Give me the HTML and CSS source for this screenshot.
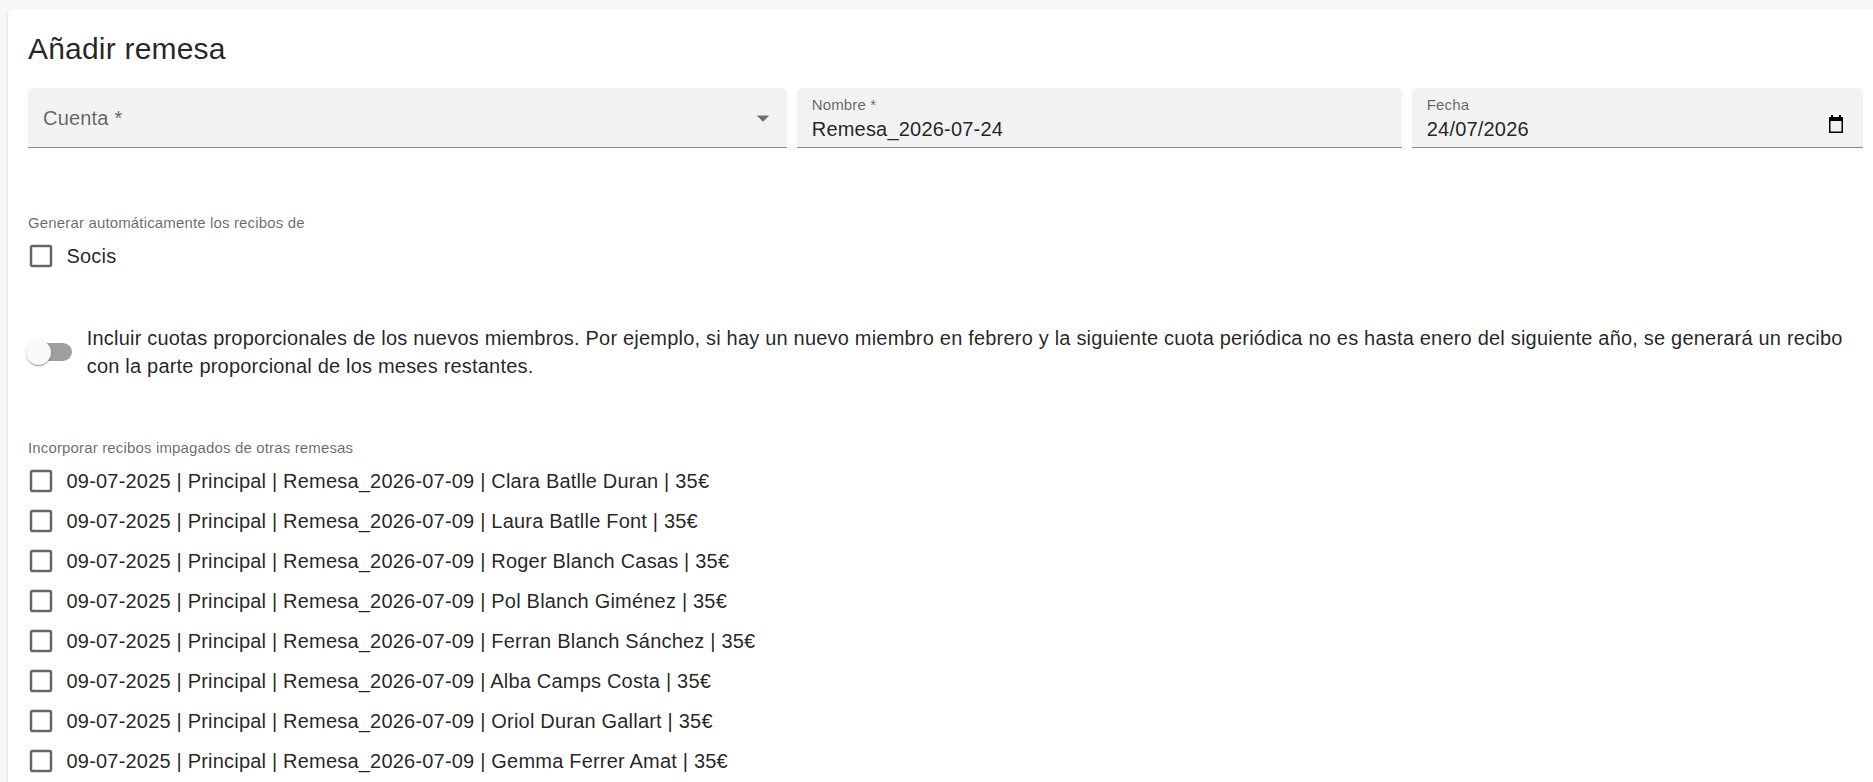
FILE: index.html
```html
<!DOCTYPE html>
<html lang="es">
<head>
<meta charset="utf-8">
<title>Añadir remesa</title>
<link rel="stylesheet" href="styles.css">
</head>
<body>
<div class="page">
  <section class="card">
    <h2 class="title">Añadir remesa</h2>

    <div class="fields">
      <div class="field field-5">
        <span class="placeholder">Cuenta *</span>
        <svg class="arrow" viewBox="0 0 24 24" aria-hidden="true"><path d="M7 10l5 5 5-5z"/></svg>
      </div>
      <div class="field field-4">
        <div class="field-body">
          <span class="field-label">Nombre *</span>
          <span class="field-value">Remesa_2026-07-24</span>
        </div>
      </div>
      <div class="field field-3">
        <div class="field-body">
          <span class="field-label">Fecha</span>
          <span class="field-value">24/07/2026</span>
        </div>
        <svg class="calendar" viewBox="0 0 16 18" aria-hidden="true">
          <rect x="3" y="0" width="2" height="3"/>
          <rect x="11" y="0" width="2" height="3"/>
          <path d="M1 2h14v16H1z M2.5 6v10.5h11V6z" fill-rule="evenodd"/>
        </svg>
      </div>
    </div>

    <div class="group group-auto">
      <p class="legend">Generar automáticamente los recibos de</p>
      <label class="check">
        <svg class="box" viewBox="0 0 24 24" aria-hidden="true"><path d="M19 5v14H5V5h14m0-2H5c-1.11 0-2 .9-2 2v14c0 1.1.89 2 2 2h14c1.11 0 2-.9 2-2V5c0-1.1-.89-2-2-2z"/></svg>
        <span>Socis</span>
      </label>
    </div>

    <label class="switch-row">
      <span class="switch"><span class="track"></span><span class="thumb"></span></span>
      <span class="switch-text">Incluir cuotas proporcionales de los nuevos miembros. Por ejemplo, si hay un nuevo miembro en febrero y la siguiente cuota periódica no es hasta enero del siguiente año, se generará un recibo con la parte proporcional de los meses restantes.</span>
    </label>

    <div class="group group-unpaid">
      <p class="legend">Incorporar recibos impagados de otras remesas</p>
      <ul class="receipts">
        <li><label class="check"><svg class="box" viewBox="0 0 24 24" aria-hidden="true"><path d="M19 5v14H5V5h14m0-2H5c-1.11 0-2 .9-2 2v14c0 1.1.89 2 2 2h14c1.11 0 2-.9 2-2V5c0-1.1-.89-2-2-2z"/></svg><span>09-07-2025 | Principal | Remesa_2026-07-09 | Clara Batlle Duran | 35€</span></label></li>
        <li><label class="check"><svg class="box" viewBox="0 0 24 24" aria-hidden="true"><path d="M19 5v14H5V5h14m0-2H5c-1.11 0-2 .9-2 2v14c0 1.1.89 2 2 2h14c1.11 0 2-.9 2-2V5c0-1.1-.89-2-2-2z"/></svg><span>09-07-2025 | Principal | Remesa_2026-07-09 | Laura Batlle Font | 35€</span></label></li>
        <li><label class="check"><svg class="box" viewBox="0 0 24 24" aria-hidden="true"><path d="M19 5v14H5V5h14m0-2H5c-1.11 0-2 .9-2 2v14c0 1.1.89 2 2 2h14c1.11 0 2-.9 2-2V5c0-1.1-.89-2-2-2z"/></svg><span>09-07-2025 | Principal | Remesa_2026-07-09 | Roger Blanch Casas | 35€</span></label></li>
        <li><label class="check"><svg class="box" viewBox="0 0 24 24" aria-hidden="true"><path d="M19 5v14H5V5h14m0-2H5c-1.11 0-2 .9-2 2v14c0 1.1.89 2 2 2h14c1.11 0 2-.9 2-2V5c0-1.1-.89-2-2-2z"/></svg><span>09-07-2025 | Principal | Remesa_2026-07-09 | Pol Blanch Giménez | 35€</span></label></li>
        <li><label class="check"><svg class="box" viewBox="0 0 24 24" aria-hidden="true"><path d="M19 5v14H5V5h14m0-2H5c-1.11 0-2 .9-2 2v14c0 1.1.89 2 2 2h14c1.11 0 2-.9 2-2V5c0-1.1-.89-2-2-2z"/></svg><span>09-07-2025 | Principal | Remesa_2026-07-09 | Ferran Blanch Sánchez | 35€</span></label></li>
        <li><label class="check"><svg class="box" viewBox="0 0 24 24" aria-hidden="true"><path d="M19 5v14H5V5h14m0-2H5c-1.11 0-2 .9-2 2v14c0 1.1.89 2 2 2h14c1.11 0 2-.9 2-2V5c0-1.1-.89-2-2-2z"/></svg><span>09-07-2025 | Principal | Remesa_2026-07-09 | Alba Camps Costa | 35€</span></label></li>
        <li><label class="check"><svg class="box" viewBox="0 0 24 24" aria-hidden="true"><path d="M19 5v14H5V5h14m0-2H5c-1.11 0-2 .9-2 2v14c0 1.1.89 2 2 2h14c1.11 0 2-.9 2-2V5c0-1.1-.89-2-2-2z"/></svg><span>09-07-2025 | Principal | Remesa_2026-07-09 | Oriol Duran Gallart | 35€</span></label></li>
        <li><label class="check"><svg class="box" viewBox="0 0 24 24" aria-hidden="true"><path d="M19 5v14H5V5h14m0-2H5c-1.11 0-2 .9-2 2v14c0 1.1.89 2 2 2h14c1.11 0 2-.9 2-2V5c0-1.1-.89-2-2-2z"/></svg><span>09-07-2025 | Principal | Remesa_2026-07-09 | Gemma Ferrer Amat | 35€</span></label></li>
      </ul>
    </div>
  </section>
</div>
</body>
</html>
```

FILE: styles.css
```css
* {
  box-sizing: border-box;
}

html,
body {
  margin: 0;
  height: 100%;
  overflow: hidden;
  background: #f7f7f7;
}

body {
  font-family: "Liberation Sans", Arial, Helvetica, sans-serif;
  color: rgba(0, 0, 0, 0.87);
  font-size: 20px;
  line-height: 1.5;
  letter-spacing: 0.2px;
}

.page {
  padding: 9px 0 0 8px;
}

/* Paper card; it runs slightly past the right edge of the window */
.card {
  margin-right: -10px;
  background: #fff;
  border-radius: 5px;
  box-shadow: 0 2px 1px -1px rgba(0, 0, 0, 0.2), 0 1px 1px 0 rgba(0, 0, 0, 0.14), 0 1px 3px 0 rgba(0, 0, 0, 0.12);
  padding: 20px 20px 40px;
  min-height: 900px;
}

.title {
  margin: 0 0 19px;
  font-size: 30px;
  font-weight: 400;
  line-height: 40px;
  letter-spacing: 0.2px;
}

/* Filled text fields on a 12-column row */
.fields {
  display: flex;
  gap: 10px;
}

.field {
  min-width: 0;
  height: 60px;
  display: flex;
  align-items: center;
  background: rgba(0, 0, 0, 0.05);
  border-bottom: 1px solid rgba(0, 0, 0, 0.42);
  border-radius: 5px 5px 0 0;
  padding: 0 15px;
}

.field-5 { flex: 0 0 calc((100% + 10px) * 5 / 12 - 10px); }
.field-4 { flex: 0 0 calc((100% + 10px) * 4 / 12 - 10px); }
.field-3 { flex: 0 0 calc((100% + 10px) * 3 / 12 - 10px); }

.placeholder {
  flex: 1;
  color: rgba(0, 0, 0, 0.6);
  line-height: 28.75px;
  padding-top: 2px;
}

.arrow {
  width: 30px;
  height: 30px;
  fill: rgba(0, 0, 0, 0.54);
  margin-right: -6px;
}

.field-body {
  flex: 1;
  display: flex;
  flex-direction: column;
  align-self: stretch;
  padding-top: 6px;
}

.field-label {
  font-size: 15px;
  line-height: 21px;
  letter-spacing: 0.15px;
  color: rgba(0, 0, 0, 0.6);
}

.field-value {
  line-height: 28.75px;
  color: rgba(0, 0, 0, 0.87);
}

.calendar {
  width: 16px;
  height: 18px;
  fill: #000;
  margin: 12px 4px 0 0;
}

/* Checkbox groups */
.group-auto {
  margin-top: 64px;
}

.group-unpaid {
  margin-top: 57px;
}

.legend {
  margin: 0 0 3px;
  font-size: 15px;
  line-height: 21px;
  letter-spacing: 0.15px;
  color: rgba(0, 0, 0, 0.6);
}

.receipts {
  list-style: none;
  margin: 0;
  padding: 0;
}

.check {
  display: flex;
  align-items: center;
  height: 40px;
  margin-left: -2.5px;
  gap: 11px;
  cursor: pointer;
}

.box {
  width: 30px;
  height: 30px;
  flex: none;
  fill: rgba(0, 0, 0, 0.6);
}

/* Switch */
.switch-row {
  display: flex;
  align-items: center;
  margin: 48px 0 0 -13.75px;
  cursor: pointer;
}

.switch {
  position: relative;
  flex: none;
  width: 72.5px;
  height: 47.5px;
}

.track {
  position: absolute;
  left: 15px;
  top: 15px;
  width: 42.5px;
  height: 17.5px;
  border-radius: 9px;
  background: rgba(0, 0, 0, 0.38);
}

.thumb {
  position: absolute;
  left: 11.25px;
  top: 11.25px;
  width: 25px;
  height: 25px;
  border-radius: 50%;
  background: #fafafa;
  box-shadow: 0 2px 1px -1px rgba(0, 0, 0, 0.2), 0 1px 1px 0 rgba(0, 0, 0, 0.14), 0 1px 3px 0 rgba(0, 0, 0, 0.12);
}

.switch-text {
  line-height: 28px;
}
```
